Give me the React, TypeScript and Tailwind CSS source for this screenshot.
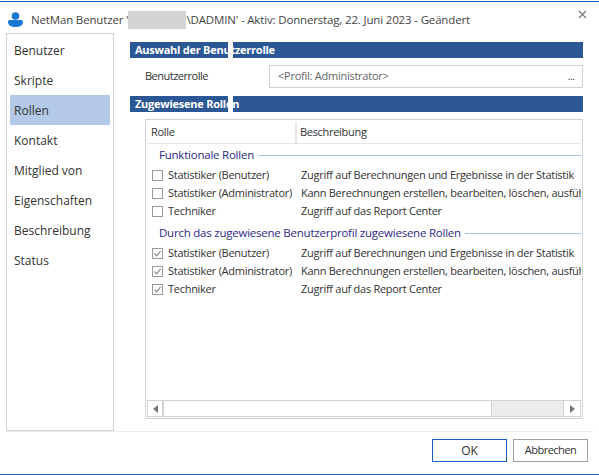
import React from "react";

const font = { fontFamily: '"Open Sans", "Noto Sans", sans-serif' };

const nav = ["Benutzer", "Skripte", "Rollen", "Kontakt", "Mitglied von", "Eigenschaften", "Beschreibung", "Status"];
const rows = [
  ["Statistiker (Benutzer)", "Zugriff auf Berechnungen und Ergebnisse in der Statistik"],
  ["Statistiker (Administrator)", "Kann Berechnungen erstellen, bearbeiten, löschen, ausführen"],
  ["Techniker", "Zugriff auf das Report Center"],
];

function Section({ title }: { title: string }) {
  return (
    <div className="relative h-4 bg-[#2b5797] pl-[5px] text-[11px] leading-4 font-bold tracking-[-0.25px] text-white">
      {title}
      <div className="absolute left-[98px] top-0 h-4 w-[5px] bg-white" />
    </div>
  );
}

function Group({ title, checked }: { title: string; checked: boolean }) {
  return (
    <div>
      <div className="flex h-[18px] items-center gap-1 pl-[12px]">
        <span className="text-[11.5px] tracking-[-0.23px] whitespace-nowrap text-[#2e2a86]">{title}</span>
        <div className="h-px flex-1 bg-[#a9c4e6]" />
      </div>
      <div className="mt-[2px]">
        {rows.map(([a, b]) => (
          <div key={a} className="flex h-[18px] items-center text-[11px] tracking-[-0.28px] whitespace-nowrap text-[#333]">
            <span className="ml-[5px] flex h-[11px] w-[11px] shrink-0 items-center justify-center border border-[#999] bg-white">
              {checked && (
                <svg viewBox="0 0 9 9" className="h-[9px] w-[9px]">
                  <path d="M1.5 4.5 L3.7 6.8 L7.6 1.8" fill="none" stroke="#8a8a8a" strokeWidth="1.2" />
                </svg>
              )}
            </span>
            <span className="ml-[5px] w-[133px] shrink-0">{a}</span>
            <span className="min-w-0 flex-1 overflow-hidden">{b}</span>
          </div>
        ))}
      </div>
    </div>
  );
}

export default function App() {
  return (
    <div style={font} className="flex h-[475px] w-[599px] flex-col overflow-hidden bg-white text-[#333]">
      <div className="mt-px h-px shrink-0 bg-[#1565c0]" />
      <div className="relative flex h-[31px] shrink-0 items-center pt-[4px] pl-[8px]">
        <svg viewBox="0 0 15 15" className="h-[15px] w-[15px] shrink-0">
          <circle cx="7.5" cy="4" r="3.8" fill="#1976d2" />
          <path d="M0 10 C0 8.6 1 8 2.4 8 H12.6 C14 8 15 8.6 15 10 C15 13 12 15 7.5 15 C3 15 0 13 0 10 Z" fill="#1976d2" />
        </svg>
        <div className="ml-[8px] flex items-center text-[11.5px] tracking-[-0.16px] whitespace-nowrap text-[#444]">
          <span>NetMan Benutzer '</span>
          <span className="h-[18px] w-[58px] bg-[#d4d4d4]" />
          <span>\DADMIN' - Aktiv: Donnerstag, 22. Juni 2023 - Geändert</span>
        </div>
        <svg viewBox="0 0 9 9" className="absolute top-[8px] left-[578px] h-[9px] w-[9px]">
          <path d="M1 1 L8 8 M8 1 L1 8" stroke="#777" strokeWidth="1.2" />
        </svg>
      </div>

      <div className="flex h-[398px] shrink-0 pl-[6px]">
        <div className="flex w-[108px] shrink-0 flex-col border border-[#d2d2d2] px-[3px] pt-[1px]">
          {nav.map((n) => (
            <div
              key={n}
              className={`flex h-[30px] items-center pt-[1px] pl-[4px] text-[12px] text-[#333] ${n === "Rollen" ? "bg-[#b3c9e7]" : ""}`}
            >
              {n}
            </div>
          ))}
        </div>

        <div className="ml-[16px] flex w-[453px] shrink-0 flex-col pt-[9px]">
          <Section title="Auswahl der Benutzerrolle" />
          <div className="mt-[7px] flex h-[23px] items-center">
            <span className="ml-[15px] w-[124px] text-[11px] tracking-[-0.5px] text-[#333]">Benutzerrolle</span>
            <div className="flex h-[23px] flex-1 items-center justify-between border border-[#d2d2d2] pr-[7px] pl-[8px] text-[11px] tracking-[-0.25px] text-[#666]">
              <span>&lt;Profil: Administrator&gt;</span>
              <span className="text-[10px] text-[#333]">...</span>
            </div>
          </div>
          <div className="mt-[8px]">
            <Section title="Zugewiesene Rollen" />
          </div>

          <div className="mt-[7px] ml-[15px] flex h-[300px] w-[438px] flex-col border border-[#d2d2d2] p-px">
            <div className="flex h-[23px] shrink-0 border-b border-[#e6e6e6] pt-[1px] text-[11px] tracking-[-0.3px] text-[#333]">
              <div className="flex w-[150px] items-center border-r-2 border-[#e6e6e6] pl-[4px]">Rolle</div>
              <div className="flex flex-1 items-center pl-[3px]">Beschreibung</div>
            </div>
            <div className="flex min-h-0 flex-1 flex-col gap-[4px] overflow-hidden pt-[2px]">
              <Group title="Funktionale Rollen" checked={false} />
              <Group title="Durch das zugewiesene Benutzerprofil zugewiesene Rollen" checked={true} />
            </div>
            <div className="flex h-[17px] shrink-0 items-stretch border border-[#d2d2d2] bg-[#ececec]">
              <div className="flex w-[16px] items-center justify-center border-r-2 border-[#d2d2d2] bg-white">
                <div className="h-0 w-0 border-y-[4px] border-r-[5px] border-y-transparent border-r-[#777]" />
              </div>
              <div className="w-[328px] border-r border-[#d2d2d2] bg-white" />
              <div className="flex-1" />
              <div className="flex w-[17px] items-center justify-center border-l border-[#d2d2d2] bg-white">
                <div className="h-0 w-0 border-y-[4px] border-l-[5px] border-y-transparent border-l-[#777]" />
              </div>
            </div>
          </div>
        </div>
      </div>

      <div className="ml-[6px] h-px w-[587px] shrink-0 bg-[#ececec]" />
      <div className="flex flex-1 items-start justify-end gap-[6px] pt-[7px] pr-[11px]">
        <button className="h-[23px] w-[75px] border border-[#1565c0] bg-white text-[12px] text-[#333]">OK</button>
        <button className="h-[23px] w-[75px] border border-[#a0a0a0] bg-white text-[11px] tracking-[-0.5px] text-[#333]">Abbrechen</button>
      </div>
      <div className="h-px shrink-0 bg-[#1565c0]" />
    </div>
  );
}
